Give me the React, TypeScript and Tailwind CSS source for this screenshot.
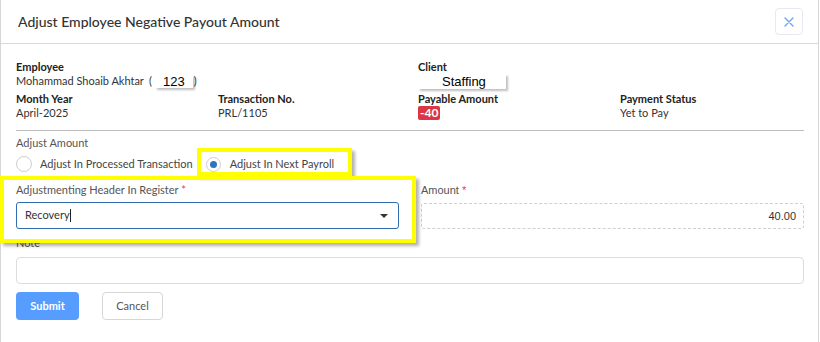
import React from 'react';

const ui = { fontFamily: 'Lato, "Noto Sans", sans-serif' };
const arial = { fontFamily: '"Liberation Sans", Arial, sans-serif' };

const Info: React.FC<{ label: string; children: React.ReactNode }> = ({ label, children }) => (
  <div className="flex flex-col">
    <div className="text-[11px] leading-[14px] font-bold text-[#222]">{label}</div>
    <div className="text-[11px] leading-[14px] text-[#333]">{children}</div>
  </div>
);

export default function App() {
  return (
    <div className="relative w-[820px] h-[342px] overflow-hidden bg-white" style={ui}>
      <div className="w-[819px] h-full border-x border-[#d6d6d6] bg-white">
        {/* header */}
        <div className="h-[44px] flex items-center justify-between pl-[17px] pr-[15px] border-b border-[#d9d9d9]">
          <h2 className="text-[14px] font-medium text-[#333]">Adjust Employee Negative Payout Amount</h2>
          <button className="w-[28px] h-[27px] flex items-center justify-center rounded-[4px] border border-[#e6e9f0]">
            <svg width="10" height="10" viewBox="0 0 10 10">
              <path d="M1 1L9 9M9 1L1 9" stroke="#6aa6f2" strokeWidth="1.4" strokeLinecap="round" />
            </svg>
          </button>
        </div>

        {/* body */}
        <div className="pl-[15px] pr-[14px] pt-[16px]">
          <div className="grid grid-cols-[202px_200px_202px_1fr] gap-y-[3px]">
            <div className="col-span-2">
              <Info label="Employee">
                <span className="flex items-center">
                  <span>Mohammad Shoaib Akhtar</span>
                  <span className="ml-[5px]">(</span>
                  <span
                    className="ml-[3px] mr-[1px] w-[38px] h-[13px] leading-[13px] bg-white text-center text-[13px] text-black shadow-[2px_2px_2px_rgba(0,0,0,0.25)]"
                    style={arial}
                  >
                    123
                  </span>
                  <span>)</span>
                </span>
              </Info>
            </div>
            <div className="col-span-2">
              <Info label="Client">
                <span
                  className="block w-[88px] h-[15px] leading-[15px] bg-white pl-[24px] text-[13px] text-black shadow-[2px_2px_2px_rgba(0,0,0,0.25)]"
                  style={arial}
                >
                  Staffing
                </span>
              </Info>
            </div>
            <Info label="Month Year">April-2025</Info>
            <Info label="Transaction No.">PRL/1105</Info>
            <Info label="Payable Amount">
              <span className="inline-block px-[2px] leading-[14px] text-[12px] bg-[#dc3545] text-white font-bold rounded-[2px]">-40</span>
            </Info>
            <Info label="Payment Status">Yet to Pay</Info>
          </div>

          <div className="mt-[10px] border-t border-[#bdbdbd]" />

          <div className="mt-[5px] text-[11px] leading-[14px] text-[#555]">Adjust Amount</div>
          <div className="mt-[6px] flex items-center h-[16px] text-[11px] text-[#444]">
            <span className="w-[16px] h-[16px] rounded-full border border-[#cfcfcf] bg-white" />
            <span className="ml-[8px]">Adjust In Processed Transaction</span>
            <span className="ml-[13px] w-[15px] h-[15px] rounded-full border border-[#cfcfcf] bg-white flex items-center justify-center">
              <span className="w-[7px] h-[7px] rounded-full bg-[#2f74c0]" />
            </span>
            <span className="ml-[9px]">Adjust In Next Payroll</span>
          </div>

          <div className="mt-[11px] grid grid-cols-[383px_383px] gap-x-[22px]">
            <div>
              <div className="text-[11px] leading-[14px] text-[#555]">
                Adjustmenting Header In Register <span className="text-[#e53e3e]">*</span>
              </div>
              <div className="mt-[5px] h-[27px] rounded-[3px] border border-[#2f6db0] flex items-center justify-between pl-[8px] pr-[10px]">
                <span className="text-[11px] text-[#333] flex items-center">
                  Recovery<span className="w-px h-[13px] bg-[#222]" />
                </span>
                <svg width="8" height="4" viewBox="0 0 8 4">
                  <path d="M0 0H8L4 4Z" fill="#333" />
                </svg>
              </div>
            </div>
            <div style={arial}>
              <div className="text-[11px] leading-[14px] text-[#555]">
                Amount <span className="text-[#e53e3e]">*</span>
              </div>
              <div className="mt-[6px] h-[26px] rounded-[3px] border border-dashed border-[#cfcfcf] flex items-center justify-end pr-[7px] text-[11px] text-[#333]">
                40.00
              </div>
            </div>
          </div>

          <div className="mt-[7px] text-[11px] leading-[14px] text-[#555]">Note</div>
          <div className="mt-[7px] h-[27px] rounded-[4px] border border-[#dcdcdc]" />

          <div className="mt-[8px] flex items-center gap-[23px]">
            <button className="w-[63px] h-[28px] rounded-[4px] bg-[#579dff] text-white text-[11px] font-bold">Submit</button>
            <button className="w-[61px] h-[28px] rounded-[4px] border border-[#d6d6d6] bg-white text-[#555] text-[11px]">Cancel</button>
          </div>
        </div>
      </div>

      {/* annotation highlights */}
      <div className="absolute left-[197px] top-[148px] w-[155px] h-[28px] border-4 border-[#ffff00] shadow-[3px_3px_3px_rgba(0,0,0,0.3)]" />
      <div className="absolute left-0 top-[176px] w-[416px] h-[67px] border-4 border-[#ffff00] shadow-[3px_3px_3px_rgba(0,0,0,0.3)]" />
    </div>
  );
}
